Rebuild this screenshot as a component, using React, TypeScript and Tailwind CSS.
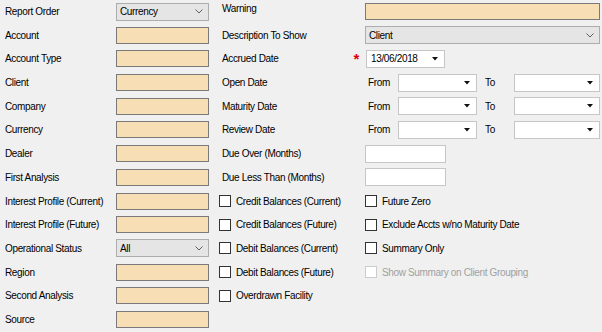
import React from "react";

const peach = "h-[17px] border border-[#7a7a7a] bg-[#f7deb4]";

function Combo({ value, width }: { value: string; width: string }) {
  return (
    <div
      className={`flex h-[18px] ${width} items-center justify-between border border-[#adadad] bg-[#e5e5e5] pl-[3px] pr-[5px]`}
    >
      <span>{value}</span>
      <svg width="8" height="5" viewBox="0 0 8 5" className="text-[#606060]">
        <path d="M0.5 0.5 L4 4 L7.5 0.5" fill="none" stroke="currentColor" strokeWidth="1" />
      </svg>
    </div>
  );
}

function DateBox({ value = "", width }: { value?: string; width: string }) {
  return (
    <div
      className={`flex h-[18px] ${width} items-center justify-between border border-[#c6c6c6] bg-white pl-[4px] pr-[6px]`}
    >
      <span>{value}</span>
      <svg width="6" height="4" viewBox="0 0 6 4">
        <path d="M0 0 L6 0 L3 3.5 Z" fill="#111" />
      </svg>
    </div>
  );
}

function Check({ label, disabled = false }: { label: string; disabled?: boolean }) {
  return (
    <div className={`flex items-center gap-[5px] ${disabled ? "text-[#a0a0a0]" : ""}`}>
      <span
        className={`h-[12px] w-[12px] border bg-white ${disabled ? "border-[#cccccc]" : "border-[#333333]"}`}
      />
      <span>{label}</span>
    </div>
  );
}

function Range() {
  return (
    <div className="flex items-center pl-[3px]">
      <span className="w-[30px]">From</span>
      <DateBox width="w-[79px]" />
      <span className="ml-[8px] w-[29px]">To</span>
      <DateBox width="w-[86px]" />
    </div>
  );
}

const leftRows: { label: string; ctrl: "peach" | "combo"; value?: string }[] = [
  { label: "Report Order", ctrl: "combo", value: "Currency" },
  { label: "Account", ctrl: "peach" },
  { label: "Account Type", ctrl: "peach" },
  { label: "Client", ctrl: "peach" },
  { label: "Company", ctrl: "peach" },
  { label: "Currency", ctrl: "peach" },
  { label: "Dealer", ctrl: "peach" },
  { label: "First Analysis", ctrl: "peach" },
  { label: "Interest Profile (Current)", ctrl: "peach" },
  { label: "Interest Profile (Future)", ctrl: "peach" },
  { label: "Operational Status", ctrl: "combo", value: "All" },
  { label: "Region", ctrl: "peach" },
  { label: "Second Analysis", ctrl: "peach" },
  { label: "Source", ctrl: "peach" },
];

function Middle({ i }: { i: number }) {
  const label = (t: string) => <span className="pl-[13px]">{t}</span>;
  switch (i) {
    case 0:
      return (
        <>
          <div className="w-[156px] -mt-[6px]">{label("Warning")}</div>
          <div className={`${peach} w-[235px]`} />
        </>
      );
    case 1:
      return (
        <>
          <div className="w-[156px]">{label("Description To Show")}</div>
          <Combo value="Client" width="w-[235px]" />
        </>
      );
    case 2:
      return (
        <>
          <div className="flex w-[157px] items-center justify-between pr-[7px]">
            {label("Accrued Date")}
            <span className="text-[15px] font-bold leading-none text-[#e00000]">*</span>
          </div>
          <DateBox value="13/06/2018" width="w-[79px]" />
        </>
      );
    case 3:
    case 4:
    case 5:
      return (
        <>
          <div className="w-[156px]">{label(["Open Date", "Maturity Date", "Review Date"][i - 3])}</div>
          <Range />
        </>
      );
    case 6:
    case 7:
      return (
        <>
          <div className="w-[156px]">{label(i === 6 ? "Due Over (Months)" : "Due Less Than (Months)")}</div>
          <div className="h-[18px] w-[81px] border border-[#c6c6c6] bg-white" />
        </>
      );
    default: {
      const mid = [
        "Credit Balances (Current)",
        "Credit Balances (Future)",
        "Debit Balances (Current)",
        "Debit Balances (Future)",
        "Overdrawn Facility",
      ][i - 8];
      const right = ["Future Zero", "Exclude Accts w/no Maturity Date", "Summary Only", "Show Summary on Client Grouping"][
        i - 8
      ];
      if (!mid) return null;
      return (
        <>
          <div className="w-[156px] pl-[10px]">
            <Check label={mid} />
          </div>
          {right && <Check label={right} disabled={i === 11} />}
        </>
      );
    }
  }
}

export default function App() {
  return (
    <div
      className="h-[332px] w-[602px] overflow-hidden bg-[#f0f0f0] text-[10px] tracking-[-0.35px] text-black"
      style={{ fontFamily: '"Liberation Sans", Arial, sans-serif' }}
    >
      <div className="flex flex-col gap-[6.7px] pt-[3px]">
        {leftRows.map((r, i) => (
          <div key={r.label} className="flex h-[17px] items-center">
            <span className="w-[116px] pl-[5px]">{r.label}</span>
            {r.ctrl === "combo" ? (
              <Combo value={r.value ?? ""} width="w-[93px]" />
            ) : (
              <div className={`${peach} w-[93px]`} />
            )}
            <Middle i={i} />
          </div>
        ))}
      </div>
    </div>
  );
}
